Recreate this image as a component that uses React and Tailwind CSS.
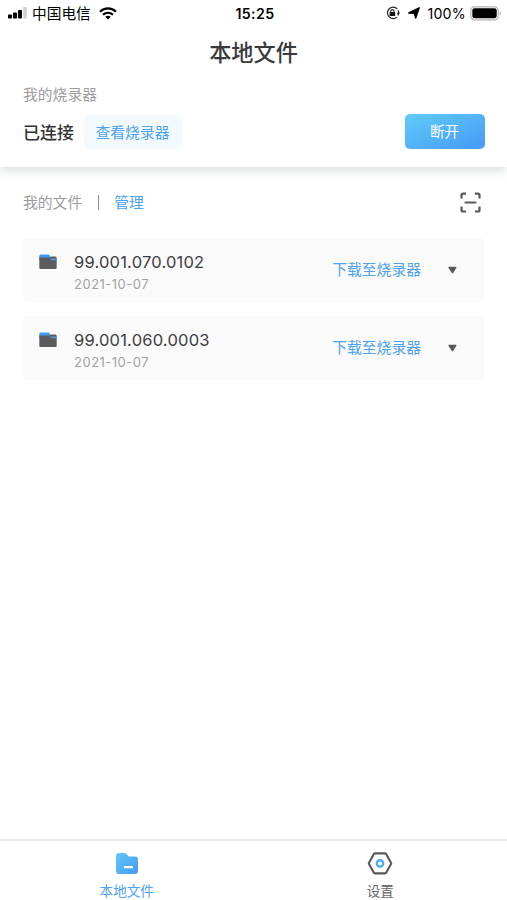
import { useState } from "react";

const files = [
  { name: "99.001.070.0102", date: "2021-10-07" },
  { name: "99.001.060.0003", date: "2021-10-07" },
];

const StatusBar = () => {
  return (
    <div className="grid h-7 grid-cols-[1fr_auto_1fr] items-center pl-2 pr-[5px] text-black">
      <div className="flex items-center">
        <svg className="-mt-[3px]" width="20" height="12" viewBox="0 0 20 12">
          <rect x="0" y="7.5" width="4" height="4" rx="0.8" />
          <rect x="5" y="5.5" width="4" height="6" rx="0.8" />
          <rect x="10" y="3" width="4" height="8.5" rx="0.8" />
          <rect x="15.2" y="0" width="3.6" height="11.5" rx="0.8" fill="#d0d0d0" />
        </svg>
        <span className="ml-1 text-[14.7px] leading-7">中国电信</span>
        <svg className="ml-2 -mt-0.5" width="18" height="13" viewBox="0 0 18 13" fill="none" stroke="#000" strokeWidth="2.2">
          <path d="M1 4.7C5.5.2 12.5.2 17 4.7" />
          <path d="M4 7.8c2.9-2.7 7.1-2.7 10 0" />
          <path d="M6.2 9.7c1.6-1.4 4-1.4 5.6 0L9 12.6z" fill="#000" stroke="none" />
        </svg>
      </div>
      <span className="-mt-px font-['Inter'] text-[14.2px] font-semibold tracking-[0.4px]">15:25</span>
      <div className="flex items-center justify-end">
        <svg className="-mt-px" width="14" height="14" viewBox="0 0 14 14" fill="none" stroke="#222">
          <path d="M11.3 2.9A5.7 5.7 0 1 0 11 11.1" strokeWidth="1.2" />
          <path d="M12 4.2a5.7 5.7 0 0 1 0 5.2" strokeWidth="1.2" />
          <path d="M10.6 6.8h3.4L12.4 9z" fill="#222" stroke="none" />
          <rect x="3.6" y="6.1" width="5.6" height="4" rx="0.6" fill="#111" stroke="none" />
          <path d="M4.8 6.5V5.2a1.6 1.6 0 0 1 3.2 0v1.3" strokeWidth="1.1" />
        </svg>
        <svg className="ml-2 -mt-px" width="12" height="12" viewBox="0 0 12 12">
          <path d="M11.2.8 7.7 11 6.4 6.4.8 6z" stroke="#000" strokeWidth="1.4" strokeLinejoin="round" />
        </svg>
        <span className="ml-[7px] -mt-px font-['Inter'] text-[14.2px] tracking-[0.25px]">100%</span>
        <svg className="ml-1 -mt-px" width="32" height="15" viewBox="0 0 32 15">
          <rect x="0.8" y="0.8" width="27.4" height="13" rx="3.6" fill="#fff" stroke="#b4b4b4" strokeWidth="1.2" />
          <rect x="2.3" y="2.3" width="24.4" height="10" rx="2.2" />
          <path d="M29.8 5.2c1.5.5 1.5 3.7 0 4.2z" fill="#b4b4b4" />
        </svg>
      </div>
    </div>
  );
};

const FolderIcon = () => (
  <svg width="18" height="16" viewBox="0 0 18 16">
    <path d="M.3 6V2Q.3.5 1.8.5h7.4q1 0 1.5 1L11.5 3v3z" fill="#3f9bf0" />
    <path d="M.3 3.4h10.6l1-.9h4.3q1.5 0 1.5 1.5v9.6q0 1.5-1.5 1.5H1.8q-1.5 0-1.5-1.5z" fill="#5c5c5e" />
    <path d="M11.3 4.6H17v1.6h-5z" fill="#3f9bf0" />
  </svg>
);

const ScanIcon = () => (
  <svg width="21" height="21" viewBox="0 0 22 22" fill="none" stroke="#58585a" strokeWidth="2.3">
    <path d="M1.6 6.8V3.2q0-1.6 1.6-1.6h3.2M15.6 1.6h3.2q1.6 0 1.6 1.6v3.6M20.4 15.2v3.6q0 1.6-1.6 1.6h-3.2M6.4 20.4H3.2q-1.6 0-1.6-1.6v-3.6" />
    <path d="M5.8 11h10.4" strokeLinecap="round" />
  </svg>
);

const FileCard = ({ file }) => {
  return (
    <div className="flex h-16 items-center rounded-[5px] bg-[#fafafa] pl-4 pr-[27px]">
      <div className="-mt-[17px]">
        <FolderIcon />
      </div>
      <div className="ml-[17px] flex-1 pt-[5px]">
        <p className="font-['Inter'] text-[16.5px] leading-[22px] tracking-[0.2px] text-[#3e3e40]">
          {file.name}
        </p>
        <p className="font-['Inter'] text-[13px] leading-[22px] tracking-[0.5px] text-[#a3a3a3]">
          {file.date}
        </p>
      </div>
      <button className="text-[14.8px] leading-5 text-[#4da3ee]">下载至烧录器</button>
      <svg className="ml-[27px]" width="9" height="8" viewBox="0 0 9 8">
        <path d="M1.2 1h6.4q.9 0 .4.9L5.2 6.6q-.7 1-1.4 0L.8 1.9Q.3 1 1.2 1z" fill="#58585a" stroke="#58585a" strokeWidth="0.5" />
      </svg>
    </div>
  );
};

const TabBar = ({ tab, setTab }) => {
  return (
    <nav className="grid h-[61px] grid-cols-2 border-t-2 border-[#ebebeb] bg-white text-[13.6px] leading-5">
      <button
        onClick={() => setTab("files")}
        className={`flex flex-col items-center pt-[11px] ${tab === "files" ? "text-[#4da3ee]" : "text-[#666]"}`}
      >
        <svg width="24" height="23" viewBox="0 0 24 23">
          <defs>
            <linearGradient id="folder" x1="0" y1="0" x2="1" y2="1">
              <stop offset="0" stopColor="#62c8f8" />
              <stop offset="1" stopColor="#459af4" />
            </linearGradient>
          </defs>
          <path
            d="M1 4q0-3 3-3h5.3q1.3 0 2.2 1L13.7 4.4H20q3 0 3 3V19q0 3-3 3H4q-3 0-3-3z"
            fill="url(#folder)"
          />
          <rect x="9" y="14" width="9" height="2.3" rx="0.4" fill="#fff" />
        </svg>
        <span className="mt-[7px]">本地文件</span>
      </button>
      <button
        onClick={() => setTab("settings")}
        className={`flex flex-col items-center pt-[11px] ${tab === "settings" ? "text-[#4da3ee]" : "text-[#666]"}`}
      >
        <svg width="26" height="23" viewBox="0 0 26 23" fill="none">
          <path
            d="M8.2 1.4h9.6q.9 0 1.3.7l4.9 8.6q.4.7 0 1.4l-4.9 8.6q-.4.7-1.3.7H8.2q-.9 0-1.3-.7L2 12.1q-.4-.7 0-1.4l4.9-8.6q.4-.7 1.3-.7z"
            stroke="#58585a"
            strokeWidth="2.1"
          />
          <circle cx="13" cy="11.4" r="3.2" stroke="#4badf4" strokeWidth="2.4" />
        </svg>
        <span className="mt-[7px]">设置</span>
      </button>
    </nav>
  );
};

const App = () => {
  const [tab, setTab] = useState("files");

  return (
    <div className="flex h-screen w-full flex-col overflow-hidden bg-white font-['Liberation_Sans','Noto_Sans_CJK_SC',sans-serif]">
      <header className="h-[167px] shrink-0 bg-white shadow-[0_4px_9px_-1px_rgba(40,55,60,0.18)]">
        <StatusBar />
        <h1 className="mt-[10px] text-center text-[22.2px] font-medium leading-8 text-[#3a3a3c]">
          本地文件
        </h1>
        <div className="pl-[23px] pr-[22px]">
          <p className="mt-[15px] text-[14.8px] leading-5 text-[#9c9c9c]">我的烧录器</p>
          <div className="mt-[9px] flex h-[35px] items-center">
            <span className="pt-[5px] text-[17px] font-medium text-[#333]">已连接</span>
            <button className="ml-[10px] h-[34px] w-[98px] rounded-[5px] bg-[#f2f9ff] pr-px pt-[3px] text-[14.8px] text-[#4da3ee]">
              查看烧录器
            </button>
            <button className="ml-auto h-[35px] w-20 rounded-[5px] bg-linear-to-br from-[#61cbf8] to-[#4799f7] pr-px pt-[3px] text-[14.6px] text-white">
              断开
            </button>
          </div>
        </div>
      </header>

      <main className="flex-1 px-[23px] pt-6">
        <div className="flex h-[22px] items-center text-[14.8px]">
          <span className="pt-[3px] text-[#9c9c9c]">我的文件</span>
          <span className="ml-4 h-[15px] w-px bg-[#8c8c8c]" />
          <button className="ml-[15px] pt-[3px] text-[#4da3ee]">管理</button>
          <button className="ml-auto mr-[3px]">
            <ScanIcon />
          </button>
        </div>
        <div className="mt-[25px] flex flex-col gap-[14px]">
          {files.map((file) => (
            <FileCard key={file.name} file={file} />
          ))}
        </div>
      </main>

      <TabBar tab={tab} setTab={setTab} />
    </div>
  );
};

export default App;
